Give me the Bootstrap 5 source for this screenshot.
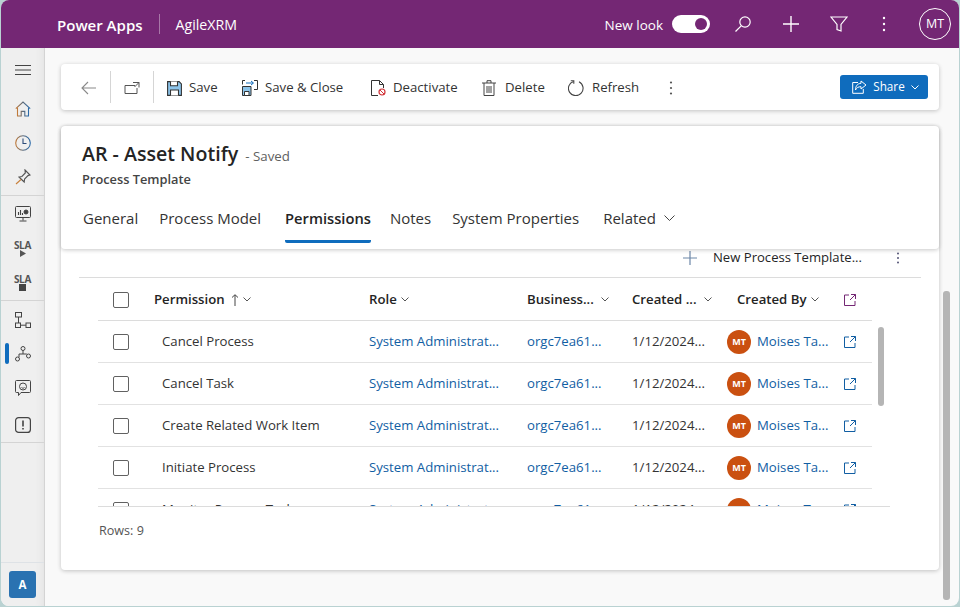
<!DOCTYPE html>
<html lang="en">
<head>
    <meta charset="UTF-8">
    <meta name="viewport" content="width=device-width, initial-scale=1.0">
    <title>AR - Asset Notify - Power Apps</title>
    <link rel="stylesheet" href="https://cdn.jsdelivr.net/npm/bootstrap@5.3.0/dist/css/bootstrap.min.css">
    <style>
        html, body { height: 100%; }
        body {
            background-color: #b9d2d2;
            font-family: "Open Sans", "Liberation Sans", sans-serif;
            font-size: 13px;
            color: #242424;
            overflow: hidden;
        }
        svg { display: block; flex-shrink: 0; }
        .app-frame {
            height: 606px;
            margin: 0 1px;
            border-radius: 8px;
            overflow: hidden;
            background: #f9f9f9;
        }
        .top-bar { height: 48px; background: #742774; color: #fff; padding: 0 8px 0 56px; }
        .brand { font-size: 15px; font-weight: 600; margin-top: 2px; }
        .brand-sep { width: 1px; height: 20px; background: #a877a8; margin: 0 16px 0 16px; }
        .env-name { font-size: 14.2px; margin-top: 2px; }
        .new-look { font-size: 13.5px; margin: 2px 9px 0 0; }
        .look-toggle { width: 38px; height: 18px; border-radius: 9px; background: #fff; padding: 3px; margin-right: 9px; }
        .look-toggle span { display: block; width: 12px; height: 12px; border-radius: 50%; background: #742774; }
        .top-icon { width: 48px; }
        .top-dots { width: 42px; }
        .user-ring { width: 32px; height: 32px; border: 1px solid #fff; border-radius: 50%; font-size: 12.5px; margin-left: 14px; }

        .side-rail { width: 44px; background: #efefef; border-right: 1px solid #d4d4d4; box-shadow: inset -8px 0 8px -8px #ddd; }
        .rail-group { padding: 1px 0; border-bottom: 1px solid #d4d4d4; }
        .rail-last { padding: 2px 0 0; }
        .rail-item { height: 34px; position: relative; }
        .rail-alert { margin-top: 3px; }
        .rail-burger { height: 43px; }
        .rail-active { position: absolute; left: 4px; top: 6px; width: 4px; height: 21px; background: #0f6cbd; border-radius: 2px; }
        .sla-text { font-size: 10px; font-weight: 700; line-height: 10px; color: #555; letter-spacing: -.3px; }
        .area-tile { width: 27px; height: 27px; background: #2a72b1; color: #fff; font-weight: 700; font-size: 11.5px; border-radius: 3px; margin: 8px 0 8px 8px; }

        .page-main { padding: 16px 3px 0 16px; min-width: 0; }
        .page-column { width: 878px; }
        .panel-card { background: #fff; border: 0; border-radius: 4px; box-shadow: 0 1px 4px rgba(0,0,0,.22); }
        .tool-bar { height: 46px; padding: 0 11px 0 0; font-size: 13px; margin-bottom: 16px; }
        .tool-btn { height: 46px; padding: 2px 0 0; gap: 7px; color: #333; font-size: 13.2px; border: 0; background: none; }
        .tool-sep { width: 1px; height: 32px; background: #d5d5d5; }
        .share-btn { width: 88px; height: 24px; background: #0f6cbd; color: #fff; font-size: 11.7px; border-radius: 3px; gap: 6px; padding-left: 3px; }

        .form-card { height: 444px; }
        .form-head { height: 123px; padding: 15px 21px 0; border-radius: 4px; box-shadow: 0 1px 4px rgba(0,0,0,.22); position: relative; }
        .record-title { font-size: 19.6px; font-weight: 600; line-height: 26px; margin: 0; }
        .record-state { font-size: 13.3px; color: #616161; margin-left: 7px; }
        .record-type { font-size: 12.8px; font-weight: 600; color: #444; line-height: 18px; margin-top: 3px; }
        .tab-strip { margin-top: 19px; gap: 21px; padding-left: 1px; }
        .tab-strip .nav-link { padding: 0 0 11px; font-size: 15px; color: #333; border-bottom: 3px solid transparent; line-height: 22px; }
        .tab-strip .nav-link.active { font-size: 14.7px; font-weight: 600; color: #242424; border-bottom-color: #0f6cbd; border-radius: 0 0 2px 2px; margin: 0 -2px 0 3px; }
        .tab-strip .tab-more { margin-left: 3px; }

        .grid-cmd { height: 29px; padding: 0 21px 10px 0; font-size: 13.1px; gap: 14px; border-bottom: 1px solid #dcdcdc; margin: 0 18px; }
        .grid-wrap { margin-left: 37px; width: 792px; height: 229px; border-bottom: 1px solid #dcdcdc; overflow: hidden; position: relative; }
        .perm-table { table-layout: fixed; width: 774px; margin: 0; font-size: 13.2px; color: #333; }
        .perm-table th, .perm-table td { padding: 2px 0 0; vertical-align: middle; border-bottom: 1px solid #e2e2e2; white-space: nowrap; background: none; }
        .perm-table th { height: 42px; font-weight: 600; color: #242424; border-bottom-color: #dcdcdc; }
        .perm-table td { height: 42px; }
        .perm-table a { color: #115ea3; text-decoration: none; }
        .head-inner { gap: 4px; }
        .pick-box[type=checkbox] { width: 16px; height: 16px; margin: 0 0 0 15px; border: 1px solid #616161; border-radius: 2px; float: none; display: block; }
        .perm-name { padding-left: 8px !important; }
        .user-name { gap: 6px; }
        .user-dot { width: 24px; height: 24px; border-radius: 50%; background: #ca5010; color: #fff; font-size: 9px; font-weight: 700; }
        .grid-thumb { position: absolute; left: 780px; top: 49px; width: 6px; height: 79px; background: #b5b5b5; border-radius: 3px; }
        .row-count { padding: 15px 0 0 38px; font-size: 12.6px; color: #555; }

        .page-track { width: 18px; position: relative; }
        .page-thumb { position: absolute; left: 4px; top: 227px; width: 7px; height: 309px; background: #b5b5b5; border-radius: 3px; }
        .grad-defs { position: absolute; width: 0; height: 0; }
    </style>
</head>
<body>
    <svg class="grad-defs"><defs><linearGradient id="railTint"><stop offset="0" stop-color="#c07a3a"/><stop offset=".5" stop-color="#5c6b7c"/><stop offset="1" stop-color="#2b6aa8"/></linearGradient></defs></svg>
    <div class="app-frame d-flex flex-column">
        <!-- Top bar -->
        <header class="top-bar d-flex align-items-center flex-shrink-0">
            <span class="brand">Power Apps</span>
            <span class="brand-sep"></span>
            <span class="env-name">AgileXRM</span>
            <div class="ms-auto d-flex align-items-center">
                <span class="new-look">New look</span>
                <div class="look-toggle d-flex justify-content-end"><span></span></div>
                <div class="top-icon d-flex justify-content-center">
                    <svg width="18" height="18" viewBox="0 0 18 18" fill="none" stroke="#fff" stroke-width="1.2"><circle cx="11" cy="7" r="5.2"/><path d="M7.2 10.8 1.5 16.5"/></svg>
                </div>
                <div class="top-icon d-flex justify-content-center">
                    <svg width="18" height="18" viewBox="0 0 18 18" fill="none" stroke="#fff" stroke-width="1.4"><path d="M9 1v16M1 9h16"/></svg>
                </div>
                <div class="top-icon d-flex justify-content-center">
                    <svg width="18" height="18" viewBox="0 0 18 18" fill="none" stroke="#fff" stroke-width="1.2"><path d="M1 2h16l-6 7.5V16l-4-1.500v-5z"/></svg>
                </div>
                <div class="top-dots d-flex justify-content-center">
                    <svg width="4" height="16" viewBox="0 0 4 16" fill="#fff"><circle cx="2" cy="2" r="1.2"/><circle cx="2" cy="8" r="1.2"/><circle cx="2" cy="14" r="1.2"/></svg>
                </div>
                <div class="user-ring d-flex align-items-center justify-content-center">MT</div>
            </div>
        </header>

        <div class="d-flex flex-grow-1" style="min-height:0">
            <!-- Left rail -->
            <nav class="side-rail d-flex flex-column flex-shrink-0">
                <div class="rail-burger d-flex align-items-center justify-content-center">
                    <svg width="16" height="10" viewBox="0 0 16 10" fill="none" stroke="#444"><path d="M0 .5h16M0 5h16M0 9.500h16"/></svg>
                </div>
                <div class="rail-group">
                    <div class="rail-item d-flex align-items-center justify-content-center">
                        <svg width="16" height="16" viewBox="0 0 16 16" fill="none" stroke="url(#railTint)" stroke-width="1.100"><path d="M.8 7.600 8 1l7.200 6.600"/><path d="M2.500 6.500V15h3.700v-4.600h3.600V15h3.700V6.500"/></svg>
                    </div>
                    <div class="rail-item d-flex align-items-center justify-content-center">
                        <svg width="16" height="16" viewBox="0 0 16 16" fill="none" stroke-width="1.100"><circle cx="8" cy="8" r="7.300" stroke="url(#railTint)"/><path d="M8 3.500V8.500h3.500" stroke="#2b4a78"/></svg>
                    </div>
                    <div class="rail-item d-flex align-items-center justify-content-center">
                        <svg width="16" height="16" viewBox="0 0 16 16" fill="none" stroke="#555" stroke-width="1.100"><path d="M10 1l5 5-2 .6-3.400 3.400-.4 3L4 8l2.900-.5L10.300 4z"/><path d="M6 10.500 1 15" stroke="#c8803c"/></svg>
                    </div>
                </div>
                <div class="rail-group">
                    <div class="rail-item d-flex align-items-center justify-content-center">
                        <svg width="16" height="16" viewBox="0 0 16 16" fill="none" stroke="#444"><rect x=".5" y=".5" width="15" height="11" rx="1"/><path d="M8 12v2.500M4.500 15h7"/><path d="M3.500 9V6M5.500 9V4M7.500 9V7" stroke-width="1.100"/><circle cx="11" cy="6" r="2" fill="#444"/></svg>
                    </div>
                    <div class="rail-item d-flex flex-column align-items-center justify-content-center">
                        <span class="sla-text">SLA</span>
                        <svg width="8" height="7" viewBox="0 0 8 7" fill="#555"><path d="M1 0l6 3.500L1 7z"/></svg>
                    </div>
                    <div class="rail-item d-flex flex-column align-items-center justify-content-center">
                        <span class="sla-text">SLA</span>
                        <svg width="7" height="7" viewBox="0 0 7 7" fill="#444"><rect width="7" height="7"/></svg>
                    </div>
                </div>
                <div class="rail-group rail-last">
                    <div class="rail-item d-flex align-items-center justify-content-center">
                        <svg width="16" height="16" viewBox="0 0 16 16" fill="none" stroke="#444"><rect x=".5" y=".5" width="6" height="4.500"/><rect x=".5" y="11" width="5" height="4.500"/><rect x="11" y="11" width="4.500" height="4.500"/><path d="M3.500 5v6M5.500 13.200H11"/></svg>
                    </div>
                    <div class="rail-item d-flex align-items-center justify-content-center">
                        <span class="rail-active"></span>
                        <svg width="16" height="16" viewBox="0 0 16 16" fill="none" stroke="#444"><circle cx="8" cy="2.500" r="2"/><circle cx="2.500" cy="13" r="2"/><circle cx="13.500" cy="10" r="2"/><path d="M8 4.500v3.500H4v3.300M8 8h3.800"/></svg>
                    </div>
                    <div class="rail-item d-flex align-items-center justify-content-center">
                        <svg width="16" height="16" viewBox="0 0 16 16" fill="none" stroke="#444"><path d="M1.500.5h13a1 1 0 0 1 1 1v10a1 1 0 0 1-1 1H6l-2.500 3v-3h-2a1 1 0 0 1-1-1v-10a1 1 0 0 1 1-1z"/><circle cx="8" cy="6.500" r="3.500"/><path d="M6.500 7.500c.8.900 2.200.900 3 0"/></svg>
                    </div>
                    <div class="rail-item rail-alert d-flex align-items-center justify-content-center">
                        <svg width="16" height="16" viewBox="0 0 16 16" fill="none" stroke="#444" stroke-width="1.200"><rect x=".6" y=".6" width="14.800" height="14.800" rx="3"/><path d="M8 3.500v6M8 11v1.500" stroke-width="1.600"/></svg>
                    </div>
                </div>
                <div class="mt-auto border-top">
                    <div class="area-tile d-flex align-items-center justify-content-center">A</div>
                </div>
            </nav>

            <!-- Main -->
            <main class="page-main d-flex flex-grow-1">
                <div class="page-column flex-shrink-0">
                    <!-- Command bar -->
                    <div class="panel-card tool-bar d-flex align-items-center">
                        <button class="tool-btn d-flex align-items-center justify-content-center" style="width:49px;padding-left:6px">
                            <svg width="15" height="14" viewBox="0 0 15 14" fill="none" stroke="#8a8a8a" stroke-width="1.100"><path d="M7 1 1 7l6 6M1 7h14"/></svg>
                        </button>
                        <span class="tool-sep"></span>
                        <button class="tool-btn d-flex align-items-center justify-content-center" style="width:42px">
                            <svg width="16" height="14" viewBox="0 0 16 14" fill="none" stroke="#555"><path d="M11 4.500H1v8h12V7M9 1.500h6v5M15 1.500 10.500 6"/></svg>
                        </button>
                        <span class="tool-sep"></span>
                        <button class="tool-btn d-flex align-items-center" style="margin-left:13px;width:75px">
                            <svg width="15" height="15" viewBox="0 0 15 15" fill="none" stroke="#333" stroke-width="1.100"><path d="M.6.600h11.500l2.300 2.300v11.500H.6z" fill="#8cc4ea"/><path d="M3.500.6v4.200h7V.6" fill="#fff"/><path d="M3.500 14.400V9h8v5.400" fill="#fff"/></svg>
                            <span>Save</span>
                        </button>
                        <button class="tool-btn d-flex align-items-center" style="width:129px">
                            <svg width="16" height="16" viewBox="0 0 16 16" fill="none" stroke="#333"><path d="M.5 6.500h8.500v9H.5z" fill="#8cc4ea"/><path d="M2.500 11.500h4.500v4h-4.500z" fill="#fff"/><path d="M3 .5H.5v4M12 .5h3.500v9H12"/><path d="M4 3h7M9 1l2.500 2L9 5" stroke="#0f6cbd"/></svg>
                            <span>Save &amp; Close</span>
                        </button>
                        <button class="tool-btn d-flex align-items-center" style="width:111px">
                            <svg width="15" height="16" viewBox="0 0 15 16" fill="none" stroke="#333"><path d="M7 15.500H.5V.5h8l4 4V8M8.500.5v4h4"/><circle cx="11" cy="12" r="3" stroke="#d13438" stroke-width="1.200"/><path d="M9 10l4 4" stroke="#d13438"/></svg>
                            <span>Deactivate</span>
                        </button>
                        <button class="tool-btn d-flex align-items-center" style="width:86px;gap:9px">
                            <svg width="14" height="16" viewBox="0 0 14 16" fill="none" stroke="#444"><path d="M0 3h14M5 3V.7h4V3M2 3v12.500h10V3M5 6v7M7 6v7M9 6v7"/></svg>
                            <span>Delete</span>
                        </button>
                        <button class="tool-btn d-flex align-items-center" style="width:90px;gap:8px">
                            <svg width="16" height="16" viewBox="0 0 16 16" fill="none" stroke="#444" stroke-width="1.100"><path d="M5.500 1.400A7.300 7.300 0 1 0 11 1.800"/><path d="M2.800 .8h3v3"/></svg>
                            <span>Refresh</span>
                        </button>
                        <button class="tool-btn d-flex align-items-center justify-content-center" style="width:26px">
                            <svg width="4" height="14" viewBox="0 0 4 14" fill="#555"><circle cx="2" cy="1.500" r="1.100"/><circle cx="2" cy="7" r="1.100"/><circle cx="2" cy="12.500" r="1.100"/></svg>
                        </button>
                        <div class="share-btn ms-auto d-flex align-items-center justify-content-center">
                            <svg width="15" height="14" viewBox="0 0 15 14" fill="none" stroke="#fff"><path d="M6 2.500H.7v10.800h10.600V9"/><path d="M9 1l5 4-5 4V6.700C6.500 6.700 4.600 7.500 3.500 10c0-4 2-6.500 5.500-6.700z"/></svg>
                            <span>Share</span>
                            <svg width="8" height="5" viewBox="0 0 8 5" fill="none" stroke="#fff"><path d="M.5.500 4 4 7.500.5"/></svg>
                        </div>
                    </div>

                    <!-- Form -->
                    <div class="panel-card form-card">
                        <div class="form-head">
                            <div class="d-flex align-items-baseline">
                                <h1 class="record-title">AR - Asset Notify</h1>
                                <span class="record-state">- Saved</span>
                            </div>
                            <div class="record-type">Process Template</div>
                            <ul class="nav tab-strip">
                                <li class="nav-item"><a class="nav-link" href="#">General</a></li>
                                <li class="nav-item"><a class="nav-link" href="#">Process Model</a></li>
                                <li class="nav-item"><a class="nav-link active" href="#">Permissions</a></li>
                                <li class="nav-item"><a class="nav-link" href="#">Notes</a></li>
                                <li class="nav-item"><a class="nav-link" href="#">System Properties</a></li>
                                <li class="nav-item tab-more"><a class="nav-link d-flex align-items-center gap-2" href="#">Related
                                    <svg width="11" height="6" viewBox="0 0 11 6" fill="none" stroke="#444"><path d="M.5.500 5.500 5.500 10.500.5"/></svg></a></li>
                            </ul>
                        </div>

                        <div class="grid-cmd d-flex align-items-center justify-content-end">
                            <svg width="14" height="14" viewBox="0 0 14 14" fill="none" stroke="#6d87a8" stroke-width="1.200"><path d="M7 0v14M0 7h14"/></svg>
                            <span style="margin-right:20px;margin-left:2px">New Process Template...</span>
                            <svg width="4" height="12" viewBox="0 0 4 12" fill="#557"><circle cx="2" cy="1.500" r="1"/><circle cx="2" cy="6" r="1"/><circle cx="2" cy="10.500" r="1"/></svg>
                        </div>

                        <div class="grid-wrap">
                            <table class="table perm-table">
                                <colgroup><col style="width:56px"><col style="width:215px"><col style="width:158px"><col style="width:105px"><col style="width:95px"><col style="width:113px"><col style="width:32px"></colgroup>
                                <thead>
                                    <tr>
                                        <th><input class="form-check-input pick-box" type="checkbox"></th>
                                        <th><div class="d-flex align-items-center head-inner">Permission
                                            <svg width="8" height="12" viewBox="0 0 8 12" fill="none" stroke="#444" style="margin-left:2px"><path d="M4 12V1M1 3.500 4 .7 7 3.500"/></svg>
                                            <svg width="8" height="5" viewBox="0 0 8 5" fill="none" stroke="#555"><path d="M.5.500 4 4 7.500.5"/></svg></div></th>
                                        <th><div class="d-flex align-items-center head-inner">Role
                                            <svg width="8" height="5" viewBox="0 0 8 5" fill="none" stroke="#555"><path d="M.5.500 4 4 7.500.5"/></svg></div></th>
                                        <th><div class="d-flex align-items-center head-inner" style="gap:7px">Business...
                                            <svg width="8" height="5" viewBox="0 0 8 5" fill="none" stroke="#555"><path d="M.5.500 4 4 7.500.5"/></svg></div></th>
                                        <th><div class="d-flex align-items-center head-inner" style="gap:7px">Created ...
                                            <svg width="8" height="5" viewBox="0 0 8 5" fill="none" stroke="#555"><path d="M.5.500 4 4 7.500.5"/></svg></div></th>
                                        <th><div class="d-flex align-items-center head-inner" style="padding-left:10px">Created By
                                            <svg width="8" height="5" viewBox="0 0 8 5" fill="none" stroke="#555"><path d="M.5.500 4 4 7.500.5"/></svg></div></th>
                                        <th><svg width="12" height="12" viewBox="0 0 12 12" fill="none" stroke="#742774" style="margin-left:4px"><path d="M5 1H.5v10.500H11V7M7 .5h4.500V5M11.500.5 6 6"/></svg></th>
                                    </tr>
                                </thead>
                                <tbody id="permRows"></tbody>
                            </table>
                            <div class="grid-thumb"></div>
                        </div>
                        <div class="row-count">Rows: 9</div>
                    </div>
                </div>
                <div class="page-track flex-shrink-0"><div class="page-thumb"></div></div>
            </main>
        </div>
    </div>

    <script src="https://cdn.jsdelivr.net/npm/bootstrap@5.3.0/dist/js/bootstrap.bundle.min.js"></script>
    <script>
        // Permission rows
        const permissions = ['Cancel Process', 'Cancel Task', 'Create Related Work Item', 'Initiate Process', 'Monitor Process Tasks'];
        const tableBody = document.getElementById('permRows');
        permissions.forEach(name => {
            const row = document.createElement('tr');
            row.innerHTML = `
                <td><input class="form-check-input pick-box" type="checkbox"></td>
                <td class="perm-name">${name}</td>
                <td><a href="#">System Administrat...</a></td>
                <td><a href="#">orgc7ea61...</a></td>
                <td>1/12/2024...</td>
                <td><div class="d-flex align-items-center user-name"><span class="user-dot d-flex align-items-center justify-content-center">MT</span><a href="#">Moises Ta...</a></div></td>
                <td><svg width="12" height="12" viewBox="0 0 12 12" fill="none" stroke="#115ea3" style="margin-left:4px"><path d="M5 1H.5v10.500H11V7M7 .5h4.500V5M11.500.5 6 6"/></svg></td>`;
            tableBody.appendChild(row);
        });
    </script>
</body>
</html>
